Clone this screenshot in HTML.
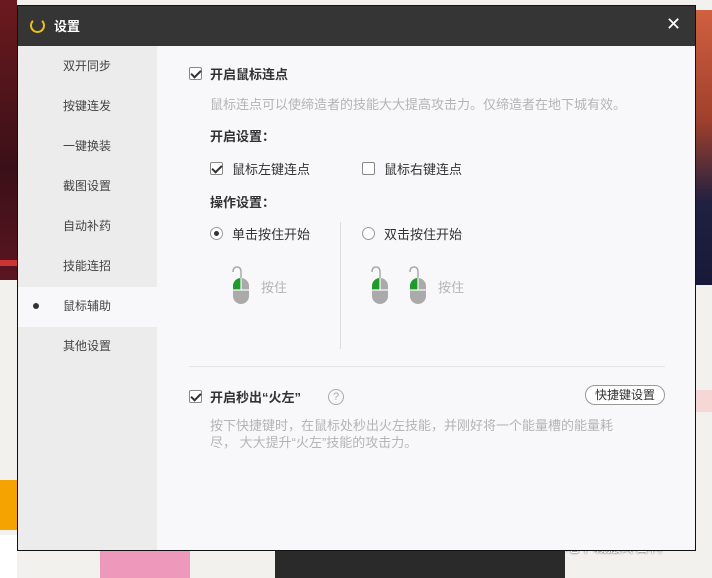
<!DOCTYPE html>
<html><head><meta charset="utf-8"><style>
*{margin:0;padding:0;box-sizing:border-box}
body{width:712px;height:578px;overflow:hidden;position:relative;background:#f3f1ee;font-family:"Liberation Sans","Noto Sans CJK SC",sans-serif;font-size:13px;color:#333}
.a{position:absolute}
.dlg{left:17px;top:5px;width:679px;height:546px;border:1px solid #111;background:#f8f8fa;overflow:hidden}
.tb{left:0;top:0;width:100%;height:40px;background:#353535}
.side{left:0;top:40px;width:139px;height:506px;background:#ececec}
.si{position:absolute;left:45px;font-size:12px;color:#444}
.cb{position:absolute;width:13px;height:13px;border:1px solid #888;background:#fff;border-radius:2px}
.cb.on::after{content:"";position:absolute;left:3px;top:0px;width:4px;height:8px;border:solid #333;border-width:0 2px 2px 0;transform:rotate(45deg)}
.t{position:absolute;white-space:nowrap}
.g{color:#b4b4b4;font-size:13px}
.b{font-weight:bold;font-size:13px;color:#333}
.rd{position:absolute;width:13px;height:13px;border:1px solid #999;border-radius:50%;background:#fff}
</style></head><body>
<div class="a" style="left:0;top:0;width:17px;height:280px;background:linear-gradient(#6a1a1e,#3a1018 60%,#5b1520)"></div>
<div class="a" style="left:0;top:260px;width:17px;height:6px;background:#c33"></div>
<div class="a" style="left:0;top:480px;width:17px;height:50px;background:#f5a300"></div>
<div class="a" style="left:0;top:535px;width:17px;height:43px;background:#fff"></div>
<div class="a" style="left:696px;top:10px;width:16px;height:275px;background:linear-gradient(#d06040,#a0402c 40%,#202040 70%,#181838)"></div>
<div class="a" style="left:696px;top:390px;width:16px;height:22px;background:#f7d6d6"></div>
<div class="a" style="left:100px;top:551px;width:90px;height:27px;background:#e9b"></div>
<div class="a" style="left:275px;top:551px;width:290px;height:27px;background:#2a2a2a"></div>
<div class="t" style="left:565px;top:537px;color:#fff;font-size:14px;text-shadow:0 0 2px #000">地下城搬砖百科</div>
<div class="a dlg">
 <div class="a tb">
  <div class="a" style="left:12px;top:12px;width:15px;height:15px;border:2.5px solid #e8c21a;border-radius:50%;border-top-color:transparent"></div>
  <div class="t" style="left:36px;top:10px;color:#fff;font-weight:bold;font-size:13px">设置</div>
  <div class="t" style="left:648px;top:8px;color:#fff;font-size:18px">✕</div>
 </div>
 <div class="a side">
  <div class="si" style="top:11px">双开同步</div>
  <div class="si" style="top:51px">按键连发</div>
  <div class="si" style="top:91px">一键换装</div>
  <div class="si" style="top:131px">截图设置</div>
  <div class="si" style="top:171px">自动补药</div>
  <div class="si" style="top:211px">技能连招</div>
  <div class="a" style="left:0;top:241px;width:139px;height:40px;background:#f8f8fa"></div>
  <div class="a" style="left:15px;top:257px;width:6px;height:6px;border-radius:50%;background:#333"></div>
  <div class="si" style="top:251px">鼠标辅助</div>
  <div class="si" style="top:291px">其他设置</div>
 </div>
 <div class="cb on" style="left:171px;top:61px"></div>
 <div class="t b" style="left:192px;top:58px">开启鼠标连点</div>
 <div class="t g" style="left:192px;top:88px">鼠标连点可以使缔造者的技能大大提高攻击力。仅缔造者在地下城有效。</div>
 <div class="t b" style="left:192px;top:120px">开启设置：</div>
 <div class="cb on" style="left:192px;top:156px"></div>
 <div class="t" style="left:214px;top:153px">鼠标左键连点</div>
 <div class="cb" style="left:344px;top:156px"></div>
 <div class="t" style="left:366px;top:153px">鼠标右键连点</div>
 <div class="t b" style="left:192px;top:186px">操作设置：</div>
 <div class="rd" style="left:192px;top:221px"><div class="a" style="left:3px;top:3px;width:5px;height:5px;border-radius:50%;background:#333"></div></div>
 <div class="t" style="left:214px;top:218px">单击按住开始</div>
 <div class="a" style="left:322px;top:216px;width:1px;height:127px;background:#ddd"></div>
 <div class="rd" style="left:344px;top:221px"></div>
 <div class="t" style="left:366px;top:218px">双击按住开始</div>
 <svg class="a" style="left:205px;top:258px" width="40" height="40"><path d="M10 8q0-5 4-5t4 5v8" fill="none" stroke="#aaa" stroke-width="1.5"/><rect x="10" y="14" width="16" height="26" rx="8" fill="#aaa"/><path d="M10 26v-4a8 8 0 0 1 8-8v12z" fill="#1e9a2a"/><path d="M10 26h16M18 14v12" stroke="#f8f8fa" stroke-width="1.2"/></svg>
 <div class="t g" style="left:243px;top:271px;font-size:13px">按住</div>
 <svg class="a" style="left:344px;top:258px" width="40" height="40"><path d="M10 8q0-5 4-5t4 5v8" fill="none" stroke="#aaa" stroke-width="1.5"/><rect x="10" y="14" width="16" height="26" rx="8" fill="#aaa"/><path d="M10 26v-4a8 8 0 0 1 8-8v12z" fill="#1e9a2a"/><path d="M10 26h16M18 14v12" stroke="#f8f8fa" stroke-width="1.2"/></svg>
 <svg class="a" style="left:382px;top:258px" width="40" height="40"><path d="M10 8q0-5 4-5t4 5v8" fill="none" stroke="#aaa" stroke-width="1.5"/><rect x="10" y="14" width="16" height="26" rx="8" fill="#aaa"/><path d="M10 26v-4a8 8 0 0 1 8-8v12z" fill="#1e9a2a"/><path d="M10 26h16M18 14v12" stroke="#f8f8fa" stroke-width="1.2"/></svg>
 <div class="t g" style="left:420px;top:271px;font-size:13px">按住</div>
 <div class="a" style="left:171px;top:360px;width:476px;height:1px;background:#e4e4e6"></div>
 <div class="cb on" style="left:171px;top:384px"></div>
 <div class="t b" style="left:192px;top:381px">开启秒出“火左”</div>
 <div class="a" style="left:310px;top:383px;width:16px;height:16px;border:1px solid #aaa;border-radius:50%;color:#aaa;font-size:11px;text-align:center;line-height:14px">?</div>
 <div class="a" style="left:567px;top:379px;width:80px;height:20px;border:1px solid #999;border-radius:10px;font-size:12px;text-align:center;line-height:18px;background:#fff">快捷键设置</div>
 <div class="t g" style="left:192px;top:409px">按下快捷键时，在鼠标处秒出火左技能，并刚好将一个能量槽的能量耗</div>
 <div class="t g" style="left:192px;top:426px">尽， 大大提升“火左”技能的攻击力。</div>
</div>
</body></html>
